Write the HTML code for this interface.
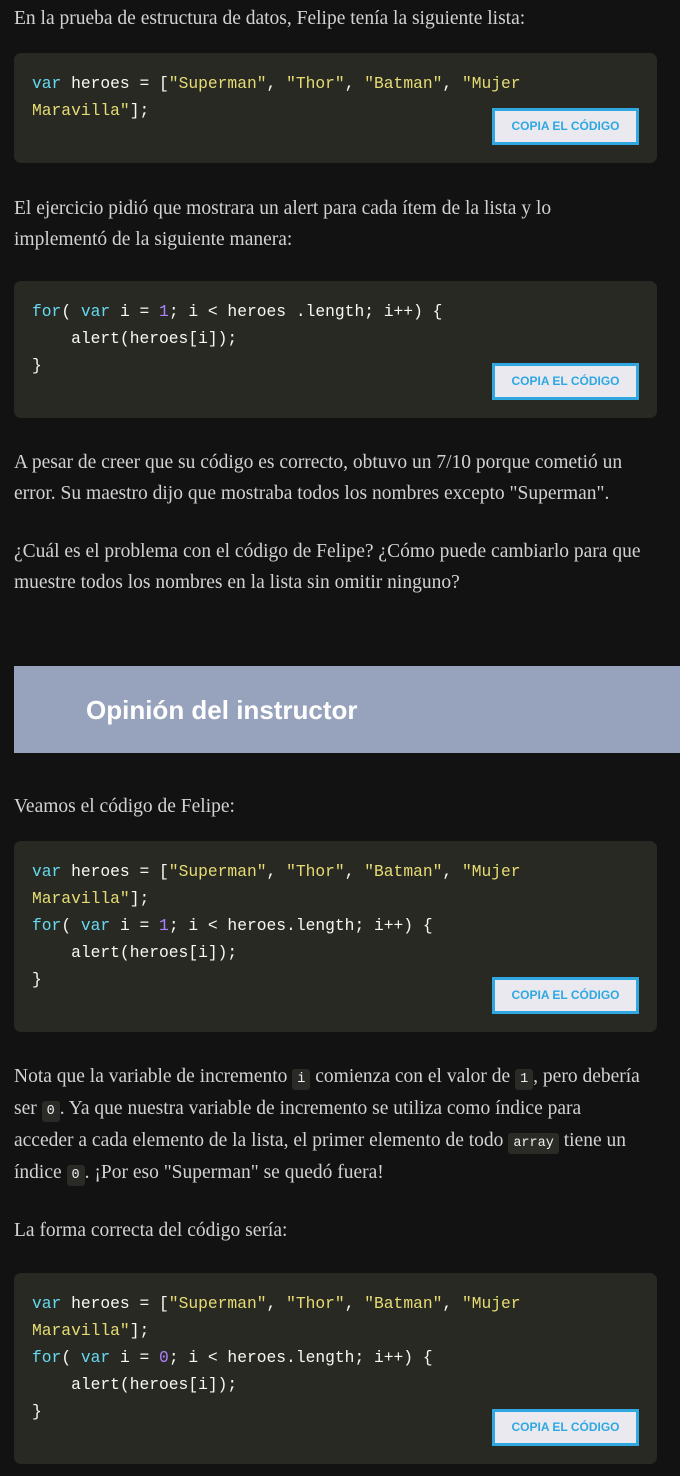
<!DOCTYPE html>
<html><head><meta charset="utf-8"><style>
body{margin:0;background:#121212;width:680px;height:1476px;position:relative;overflow:hidden;font-family:"Liberation Serif",serif;color:#d2d2d2}
.p{position:absolute;left:14px;font-size:19.5px;line-height:31px;margin:0;width:680px;white-space:nowrap}
.blk{position:absolute;left:14px;width:643px;background:#282923;border-radius:7px}
.blk pre{margin:0;position:absolute;left:18px;top:17px;font-family:"Liberation Mono",monospace;font-size:16.3px;line-height:27px;color:#f8f8f2}
.k{color:#66d9ef}.s{color:#e6db74}.n{color:#ae81ff}
.btn{position:absolute;right:18px;bottom:18px;width:141px;height:31px;border:3px solid #2fa8e2;background:#e9e9ef;color:#2fa8e2;font-family:"Liberation Sans",sans-serif;font-weight:bold;font-size:12px;line-height:31px;text-align:center}
code{font-family:"Liberation Mono",monospace;font-size:13.5px;line-height:14px;background:#2a2a26;color:#eee;padding:3px 5px;border-radius:3px}
.ban{position:absolute;left:14px;top:666px;width:666px;height:87px;background:#97a3bc}
.ban h2{margin:0;position:absolute;left:72px;top:29px;font-family:"Liberation Sans",sans-serif;font-weight:bold;font-size:26px;color:#fff}
</style></head><body>
<p class="p" style="top:3px">En la prueba de estructura de datos, Felipe tenía la siguiente lista:</p>
<div class="blk" style="top:53px;height:110px"><pre><span class="k">var</span> heroes = [<span class="s">"Superman"</span>, <span class="s">"Thor"</span>, <span class="s">"Batman"</span>, <span class="s">"Mujer
Maravilla"</span>];</pre><div class="btn">COPIA EL CÓDIGO</div></div>
<p class="p" style="top:193px">El ejercicio pidió que mostrara un alert para cada ítem de la lista y lo<br>implementó de la siguiente manera:</p>
<div class="blk" style="top:281px;height:137px"><pre><span class="k">for</span>( <span class="k">var</span> i = <span class="n">1</span>; i &lt; heroes .length; i++) {
    alert(heroes[i]);
}</pre><div class="btn">COPIA EL CÓDIGO</div></div>
<p class="p" style="top:447px">A pesar de creer que su código es correcto, obtuvo un 7/10 porque cometió un<br>error. Su maestro dijo que mostraba todos los nombres excepto "Superman".</p>
<p class="p" style="top:536px">¿Cuál es el problema con el código de Felipe? ¿Cómo puede cambiarlo para que<br>muestre todos los nombres en la lista sin omitir ninguno?</p>
<div class="ban"><h2>Opinión del instructor</h2></div>
<p class="p" style="top:791px">Veamos el código de Felipe:</p>
<div class="blk" style="top:841px;height:191px"><pre><span class="k">var</span> heroes = [<span class="s">"Superman"</span>, <span class="s">"Thor"</span>, <span class="s">"Batman"</span>, <span class="s">"Mujer
Maravilla"</span>];
<span class="k">for</span>( <span class="k">var</span> i = <span class="n">1</span>; i &lt; heroes.length; i++) {
    alert(heroes[i]);
}</pre><div class="btn">COPIA EL CÓDIGO</div></div>
<p class="p" style="top:1061px;line-height:32px">Nota que la variable de incremento <code>i</code> comienza con el valor de <code>1</code>, pero debería<br>ser <code>0</code>. Ya que nuestra variable de incremento se utiliza como índice para<br>acceder a cada elemento de la lista, el primer elemento de todo <code>array</code> tiene un<br>índice <code>0</code>. ¡Por eso "Superman" se quedó fuera!</p>
<p class="p" style="top:1215px">La forma correcta del código sería:</p>
<div class="blk" style="top:1273px;height:191px"><pre><span class="k">var</span> heroes = [<span class="s">"Superman"</span>, <span class="s">"Thor"</span>, <span class="s">"Batman"</span>, <span class="s">"Mujer
Maravilla"</span>];
<span class="k">for</span>( <span class="k">var</span> i = <span class="n">0</span>; i &lt; heroes.length; i++) {
    alert(heroes[i]);
}</pre><div class="btn">COPIA EL CÓDIGO</div></div>
</body></html>
